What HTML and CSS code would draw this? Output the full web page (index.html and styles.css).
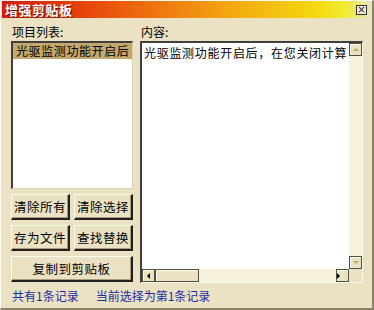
FILE: index.html
```html
<!DOCTYPE html>
<html lang="zh">
  <head>
    <meta charset="UTF-8" />
    <title>增强剪贴板</title>
    <link rel="stylesheet" href="styles.css">
  </head>
  <body>
    <div class="window">
      <div class="titlebar">
        <span class="title">增强剪贴板</span>
        <span class="close">×</span>
      </div>

      <div class="content">
        <div class="left">
          <div class="label">项目列表:</div>
          <div class="listbox">
            <div class="item selected">光驱监测功能开启后</div>
          </div>
          <div class="btn-row">
            <button class="btn">清除所有</button>
            <button class="btn">清除选择</button>
          </div>
          <div class="btn-row">
            <button class="btn">存为文件</button>
            <button class="btn">查找替换</button>
          </div>
          <button class="btn btn-wide">复制到剪贴板</button>
        </div>

        <div class="right">
          <div class="label">内容:</div>
          <div class="editor">
            <div class="text">光驱监测功能开启后，在您关闭计算</div>
            <div class="vscroll">
              <span class="sb-btn"><span class="arrow up"></span></span>
              <span class="sb-track"></span>
              <span class="sb-btn"><span class="arrow down"></span></span>
            </div>
            <div class="hscroll">
              <span class="sb-btn dark"><span class="arrow left"></span></span>
              <span class="sb-thumb"></span>
              <span class="sb-track"></span>
              <span class="sb-btn dark"><span class="arrow right"></span></span>
            </div>
            <div class="corner"></div>
          </div>
        </div>
      </div>

      <div class="status">
        <span>共有1条记录</span>
        <span>当前选择为第1条记录</span>
      </div>
    </div>
  </body>
</html>
```

FILE: styles.css
```css
:root {
  --face: #ebe2c4;
  --face-light: #f6f0dc;
  --shade: #9a9070;
  --dark: #202020;
  --select: #c4a86c;
  --status-blue: #1c2ca8;
}

* {
  margin: 0;
  padding: 0;
  box-sizing: border-box;
}

body {
  width: 374px;
  height: 310px;
  overflow: hidden;
  background: var(--face);
  font-family: "Noto Sans CJK SC", "Noto Sans", sans-serif;
  font-size: 12px;
  color: #000;
}

.window {
  width: 374px;
  height: 310px;
  background: var(--face);
  border-left: 1px solid #fffaf0;
  border-top: 1px solid #fffaf0;
  border-right: 2px solid #8c8468;
  border-bottom: 2px solid #8c8468;
  display: flex;
  flex-direction: column;
}

.titlebar {
  height: 17px;
  margin: 0 1px 0 1px;
  display: flex;
  align-items: center;
  justify-content: space-between;
  padding: 0 4px 0 3px;
  background: linear-gradient(
    90deg,
    #d41c0c 0%,
    #e43a0a 18%,
    #ee7010 40%,
    #f4a810 62%,
    #f4d810 85%,
    #f0ec30 93%,
    #ece4c0 100%
  );
}

.title {
  color: #fff;
  font-weight: 700;
  font-size: 13px;
  line-height: 17px;
  letter-spacing: 0.5px;
  text-shadow: 1px 1px 0 #801000;
}

.close {
  width: 11px;
  height: 10px;
  border: 1px solid #303030;
  background: #f4eed8;
  font-family: "DejaVu Sans", sans-serif;
  font-size: 10px;
  line-height: 8px;
  text-align: center;
  color: #202020;
}

.content {
  display: flex;
  gap: 7px;
  padding: 0 9px 0 10px;
  height: 266px;
}

.label {
  height: 23px;
  line-height: 18px;
  padding: 5px 0 0 1px;
  font-size: 12px;
}

.left {
  width: 122px;
  display: flex;
  flex-direction: column;
}

.listbox {
  height: 148px;
  background: #fff;
  border-top: 2px solid #404040;
  border-left: 2px solid #404040;
  border-right: 1px solid #d8d0b4;
  border-bottom: 1px solid #d8d0b4;
  margin-bottom: 5px;
}

.item {
  height: 16px;
  line-height: 16px;
  padding-left: 3px;
  font-size: 12px;
  letter-spacing: 0.6px;
  white-space: nowrap;
}

.item.selected {
  background: var(--select);
}

.btn-row {
  display: flex;
  gap: 4px;
  margin-bottom: 5px;
}

.btn {
  flex: 1;
  height: 26px;
  background: var(--face);
  font-family: "Noto Sans CJK SC", "Noto Sans", sans-serif;
  font-size: 12.5px;
  color: #000;
  border-top: 1px solid #fffcf0;
  border-left: 1px solid #fffcf0;
  border-right: 2px solid var(--dark);
  border-bottom: 2px solid var(--dark);
  box-shadow: inset -1px -1px 0 #a89c78;
  letter-spacing: 0.5px;
}

.btn-wide {
  flex: none;
  width: 122px;
}

.right {
  flex: 1;
  display: flex;
  flex-direction: column;
}

.editor {
  height: 242px;
  display: grid;
  grid-template-columns: 1fr 13px;
  grid-template-rows: 1fr 13px;
  border-top: 2px solid #404040;
  border-left: 2px solid #404040;
  border-right: 1px solid #fffaf0;
  border-bottom: 1px solid #fffaf0;
  background: #fff;
}

.text {
  padding: 2px 0 0 2px;
  font-size: 12px;
  letter-spacing: 0.7px;
  line-height: 16px;
  white-space: nowrap;
}

.vscroll {
  display: flex;
  flex-direction: column;
  background: var(--face-light);
}

.hscroll {
  display: flex;
  background: var(--face-light);
}

.sb-track {
  flex: 1;
}

.sb-btn {
  width: 13px;
  height: 13px;
  display: flex;
  align-items: center;
  justify-content: center;
  background: var(--face);
  border: 1px solid #505040;
  box-shadow: inset 1px 1px 0 #fffaf0;
}

.sb-thumb {
  width: 44px;
  background: var(--face);
  border: 1px solid #505040;
  box-shadow: inset 1px 1px 0 #fffaf0;
}

.corner {
  background: var(--face);
}

.arrow {
  width: 0;
  height: 0;
  border: 3px solid transparent;
}

.arrow.up {
  border-bottom-color: #c0a860;
  border-top-width: 0;
}

.arrow.down {
  border-top-color: #c0a860;
  border-bottom-width: 0;
}

.arrow.left {
  border-right-color: #000;
  border-left-width: 0;
}

.arrow.right {
  border-left-color: #000;
  border-right-width: 0;
}

.status {
  flex: 1;
  display: flex;
  gap: 17px;
  align-items: center;
  padding: 0 0 2px 11px;
  color: var(--status-blue);
  font-size: 12px;
}
```
